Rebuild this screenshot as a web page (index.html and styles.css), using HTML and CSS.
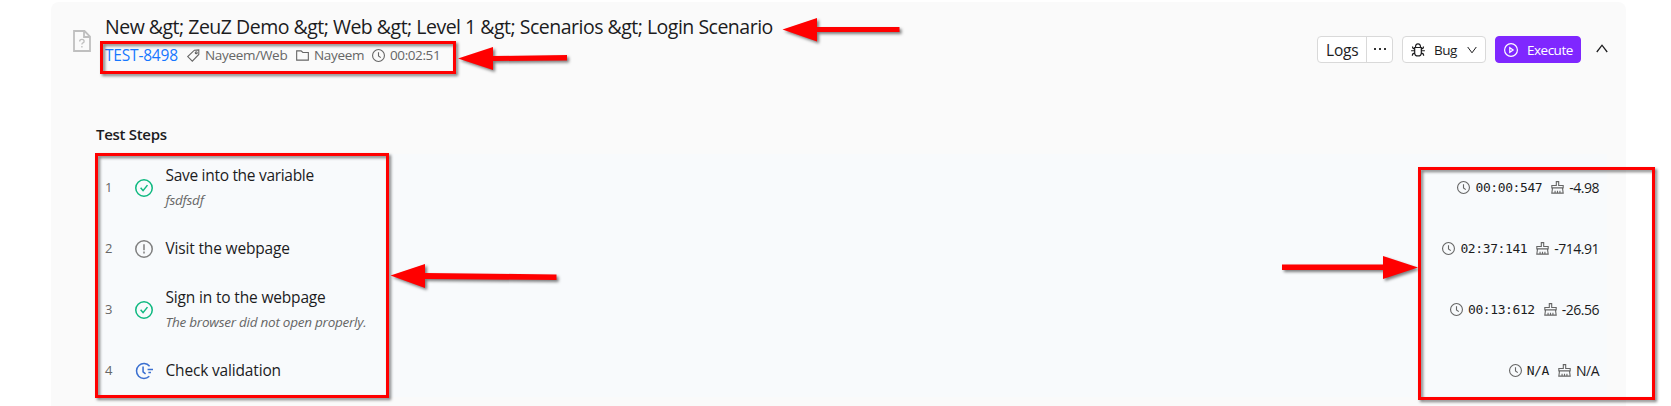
FILE: index.html
```html
<!DOCTYPE html>
<html lang="en">
<head>
<meta charset="utf-8">
<title>Login Scenario</title>
<link rel="stylesheet" href="styles.css">
</head>
<body>
<svg class="defs" width="0" height="0">
  <symbol id="clock" viewBox="64 64 896 896"><circle cx="512" cy="512" r="410"/><path d="M512 280v269l155 112"/></symbol>
  <symbol id="check" viewBox="64 64 896 896"><circle cx="512" cy="512" r="410"/><path d="M345 505l120 140 220-275"/></symbol>
  <symbol id="warn" viewBox="64 64 896 896"><circle cx="512" cy="512" r="410"/><path d="M512 272v300M512 640v96"/></symbol>
  <symbol id="late" viewBox="64 64 896 896"><path d="M790 270A370 370 0 1 0 775 770M465 290v270l125 95M690 440h270M730 590h130"/></symbol>
  <symbol id="tag" viewBox="64 64 896 896"><path d="M880 125L575 145 115 585 430 900 875 440z"/><circle cx="700" cy="318" r="68"/></symbol>
  <symbol id="folder" viewBox="64 64 896 896"><path d="M110 190h305l120 112h380v530H110z"/></symbol>
  <symbol id="bug" viewBox="64 64 896 896"><path d="M300 350h424v330a212 212 0 0 1-424 0zM350 340a162 220 0 0 1 324 0M300 560H70M724 560h230M300 430q-140 0-140-145M724 430q140 0 140-145M305 710q-155 0-155 170M719 710q155 0 155 170"/></symbol>
  <symbol id="play" viewBox="64 64 896 896"><circle cx="512" cy="512" r="410"/><path d="M435 365v294l215-147z"/></symbol>
  <symbol id="brush" viewBox="64 64 896 896"><path d="M120 540V370h310V110h164v260h310v170zM170 540L120 900h784l-50-360M345 900V740M512 900V740M679 900V740"/></symbol>
</svg>
<main class="card">
  <header class="head">
    <svg class="file" viewBox="0 0 18 22"><path d="M1 1h10.5L17 6.500V21H1zM11 1v6h6"/><path class="thin" d="M6.700 11.400q0-2 2.200-2 2.200 0 2.200 1.800 0 1.200-1.200 1.700-1 .5-1 1.500M8.900 16v1.400"/></svg>
    <div class="heading">
      <h1 class="title">New &amp;gt; ZeuZ Demo &amp;gt; Web &amp;gt; Level 1 &amp;gt; Scenarios &amp;gt; Login Scenario</h1>
      <div class="meta">
        <a class="test-id">TEST-8498</a>
        <span class="item tagged"><svg class="icon"><use href="#tag"/></svg><span>Nayeem/Web</span></span>
        <span class="item foldered"><svg class="icon"><use href="#folder"/></svg><span>Nayeem</span></span>
        <span class="item timed"><svg class="icon"><use href="#clock"/></svg><span>00:02:51</span></span>
      </div>
    </div>
    <div class="actions">
      <div class="group"><span class="logs">Logs</span><span class="more"><i></i><i></i><i></i></span></div>
      <div class="btn bug"><svg class="icon"><use href="#bug"/></svg><span>Bug</span><svg class="chev" viewBox="0 0 10 8"><path d="M.7 1L5 6.800 9.300 1"/></svg></div>
      <div class="btn execute"><svg class="icon"><use href="#play"/></svg><span>Execute</span></div>
      <svg class="collapse" viewBox="0 0 12 9"><path d="M.8 8L6 1.200 11.200 8"/></svg>
    </div>
  </header>
  <h2 class="section">Test Steps</h2>
  <section class="steps">
    <div class="row"><span class="num">1</span><svg class="status ok"><use href="#check"/></svg>
      <div class="text"><div class="name">Save into the variable</div><div class="note">fsdfsdf</div></div>
      <div class="stats"><svg class="icon"><use href="#clock"/></svg><span class="dur">00:00:547</span><svg class="icon"><use href="#brush"/></svg><span class="delta">-4.98</span></div></div>
    <div class="row"><span class="num">2</span><svg class="status idle"><use href="#warn"/></svg>
      <div class="text"><div class="name wide">Visit the webpage</div></div>
      <div class="stats"><svg class="icon"><use href="#clock"/></svg><span class="dur">02:37:141</span><svg class="icon"><use href="#brush"/></svg><span class="delta">-714.91</span></div></div>
    <div class="row"><span class="num">3</span><svg class="status ok"><use href="#check"/></svg>
      <div class="text"><div class="name wide">Sign in to the webpage</div><div class="note">The browser did not open properly.</div></div>
      <div class="stats"><svg class="icon"><use href="#clock"/></svg><span class="dur">00:13:612</span><svg class="icon"><use href="#brush"/></svg><span class="delta">-26.56</span></div></div>
    <div class="row"><span class="num">4</span><svg class="status run"><use href="#late"/></svg>
      <div class="text"><div class="name wide">Check validation</div></div>
      <div class="stats"><svg class="icon"><use href="#clock"/></svg><span class="dur">N/A</span><svg class="icon"><use href="#brush"/></svg><span class="delta">N/A</span></div></div>
  </section>
</main>
<svg class="marks" viewBox="0 0 1671 406">
  <g class="boxes">
    <rect x="101.500" y="42.500" width="353" height="30"/>
    <rect x="96.500" y="154.500" width="291" height="242"/>
    <rect x="1419.500" y="168.500" width="234" height="230"/>
  </g>
  <g class="arrows">
    <path d="M782.500 29.500L817 18v9h82.500v5H817v9.500z"/>
    <path d="M458 58.500L493 47v9l74-1v5.500l-74 .5v9z"/>
    <path d="M390.500 275.500L425 264v9l131.500 1.500v5.500L425 279v9z"/>
    <path d="M1418 267.500L1383 256v8.500h-101v5.500h101v9z"/>
  </g>
</svg>
</body>
</html>
```
FILE: styles.css
```css
* { box-sizing: border-box; }
body { margin: 0; width: 1671px; height: 406px; overflow: hidden; background: #fff; color: #1c1c1e; font-family: "Open Sans", "Noto Sans", sans-serif; }
svg { display: block; flex: none; overflow: visible; fill: none; stroke: currentColor; }
symbol { overflow: visible; }
.defs { position: absolute; }
.icon { width: 13px; height: 13px; stroke-width: 76; }
.card { width: 1575px; height: 404px; margin: 2px 0 0 51px; background: #fafafa; border-radius: 8px 8px 0 0; }
.head { display: flex; height: 118px; }
.file { width: 18px; height: 22px; margin: 28px 0 0 22px; color: #bfbfbf; stroke-width: 1.8; }
.file .thin { stroke-width: 1.4; }
.heading { width: 700px; margin: 11px 0 0 14px; white-space: nowrap; }
.title { margin: 0; font-size: 19.500px; line-height: 28px; font-weight: 400; letter-spacing: -.5px; }
.meta { display: flex; align-items: center; height: 26px; margin-top: 1px; font-size: 14px; color: #666; }
.test-id { width: 82px; font-size: 15.500px; letter-spacing: -.2px; color: #1677ff; }
.item { display: flex; align-items: center; gap: 5px; font-size: 13.500px; letter-spacing: -.3px; }
.tagged { width: 109px; }
.foldered { width: 76px; }
.timed { letter-spacing: -.4px; }
.actions { display: flex; margin: 34px 18px 0 auto; }
.group, .btn { display: flex; align-items: center; height: 27px; background: #fff; border: 1px solid #d9d9d9; border-radius: 4px; }
.group { width: 76px; margin-right: 9px; }
.logs { width: 49px; height: 25px; padding-left: 8px; border-right: 1px solid #d9d9d9; font-size: 15.500px; line-height: 26px; letter-spacing: -.2px; }
.more { display: flex; gap: 3px; margin-left: 7px; }
.more i { width: 2px; height: 2px; margin-top: -2px; background: #333; }
.bug { width: 84px; margin-right: 9px; padding-left: 8px; font-size: 13.500px; letter-spacing: -.5px; }
.bug span { width: 23px; margin: 0 10px 0 9px; }
.btn .icon { width: 14px; height: 14px; }
.chev { width: 10px; height: 8px; }
.execute { width: 86px; padding-left: 8px; background: #7f27ff; border-color: #7f27ff; color: #fff; font-size: 13.500px; letter-spacing: -.5px; }
.execute span { margin-left: 9px; }
.collapse { width: 12px; height: 9px; margin: 8px 0 0 15px; stroke-width: 1.3; }
.section { margin: 0 0 0 45px; height: 34px; font-size: 15px; line-height: 28px; font-weight: 600; letter-spacing: -.3px; }
.steps { width: 1511px; height: 243px; margin-left: 45px; padding-top: 3px; background: #f8fafc; }
.row { display: flex; align-items: center; height: 61px; padding: 0 8px 0 9px; }
.num { width: 30px; font-size: 13px; line-height: 18px; padding-bottom: 1px; color: #666; }
.status { width: 18px; height: 18px; margin-right: 12.500px; stroke-width: 76; }
.ok { color: #10b981; }
.idle { color: #808080; }
.run { color: #3a6fd0; }
.text { flex: 1; white-space: nowrap; }
.name { font-size: 15.500px; line-height: 25px; letter-spacing: -.3px; }
.wide { letter-spacing: -.17px; }
.note { font-size: 13.500px; line-height: 25px; font-style: italic; color: #666; letter-spacing: -.25px; }
.stats { display: flex; align-items: center; padding-bottom: 1px; font-size: 14px; letter-spacing: -.5px; }
.stats .icon { color: #666; }
.dur { margin: 0 9px 0 5px; font: 13px "DejaVu Sans Mono", monospace; letter-spacing: -.4px; }
.delta { margin-left: 5px; }
.marks { position: absolute; left: 0; top: 0; width: 1671px; height: 406px; stroke: none; filter: drop-shadow(2px 2px 1.500px rgba(0, 0, 0, .5)); }
.boxes { stroke: #f00; stroke-width: 3; }
.arrows { fill: #f00; }
```
